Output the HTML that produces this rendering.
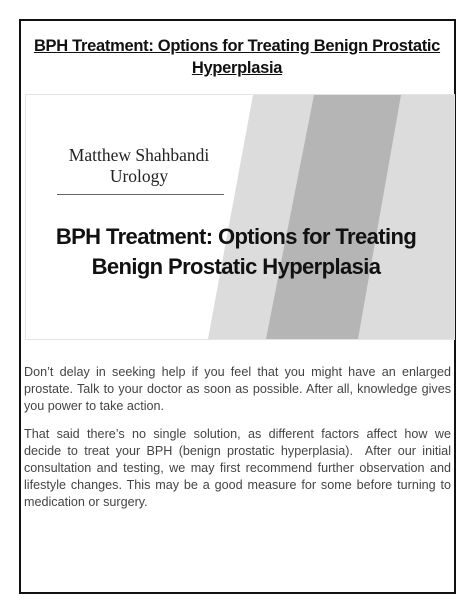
<!DOCTYPE html>
<html><head><style>
body{margin:0;width:474px;height:612px;background:#fff;position:relative;overflow:hidden;font-family:"Liberation Sans",sans-serif}
.frame{position:absolute;left:19px;top:19px;width:433px;height:571px;border:2px solid #111;}
.t{position:absolute;left:20px;width:434px;top:35px;text-align:center;font-weight:bold;font-size:16.5px;line-height:22px;color:#111;text-decoration:underline;letter-spacing:-0.3px}
.img{position:absolute;left:25px;top:94px;width:428px;height:244px;border:1px solid #e4e4e4;overflow:hidden;background:#fff}
.n{position:absolute;left:0;width:226px;text-align:center;font-family:"Liberation Serif",serif;font-size:17.5px;color:#222;line-height:21px;top:50px}
.ln{position:absolute;left:31px;top:99px;width:167px;height:1px;background:#666}
.big{position:absolute;left:0;width:420px;text-align:center;top:127px;font-weight:bold;font-size:22px;line-height:30px;color:#111;letter-spacing:-0.6px}
.p{position:absolute;left:24px;width:427px;font-size:12.6px;line-height:17px;color:#444}
.p div{text-align:justify;text-align-last:justify;white-space:nowrap}
.p div.l{text-align-last:left}
</style></head><body>
<div class="frame"></div>
<div class="t">BPH Treatment: Options for Treating Benign Prostatic<br>Hyperplasia</div>
<div class="img">
<svg width="428" height="244" style="position:absolute;left:0;top:0">
<polygon points="227,0 428,0 428,244 182,244" fill="#dcdcdc"/>
<polygon points="288,0 375,0 332,244 240,244" fill="#b5b5b5"/>
<polygon points="428,0 428,244 390,244 428,30" fill="#dcdcdc"/>
</svg>
<div class="n">Matthew Shahbandi<br>Urology</div>
<div class="ln"></div>
<div class="big">BPH Treatment: Options for Treating<br>Benign Prostatic Hyperplasia</div>
</div>
<div class="p" style="top:364px">
<div>Don’t delay in seeking help if you feel that you might have an enlarged</div>
<div>prostate. Talk to your doctor as soon as possible. After all, knowledge gives</div>
<div class="l">you power to take action.</div>
</div>
<div class="p" style="top:426px">
<div>That said there’s no single solution, as different factors affect how we</div>
<div>decide to treat your BPH (benign prostatic hyperplasia).&nbsp; After our initial</div>
<div>consultation and testing, we may first recommend further observation and</div>
<div>lifestyle changes. This may be a good measure for some before turning to</div>
<div class="l">medication or surgery.</div>
</div>
</body></html>
